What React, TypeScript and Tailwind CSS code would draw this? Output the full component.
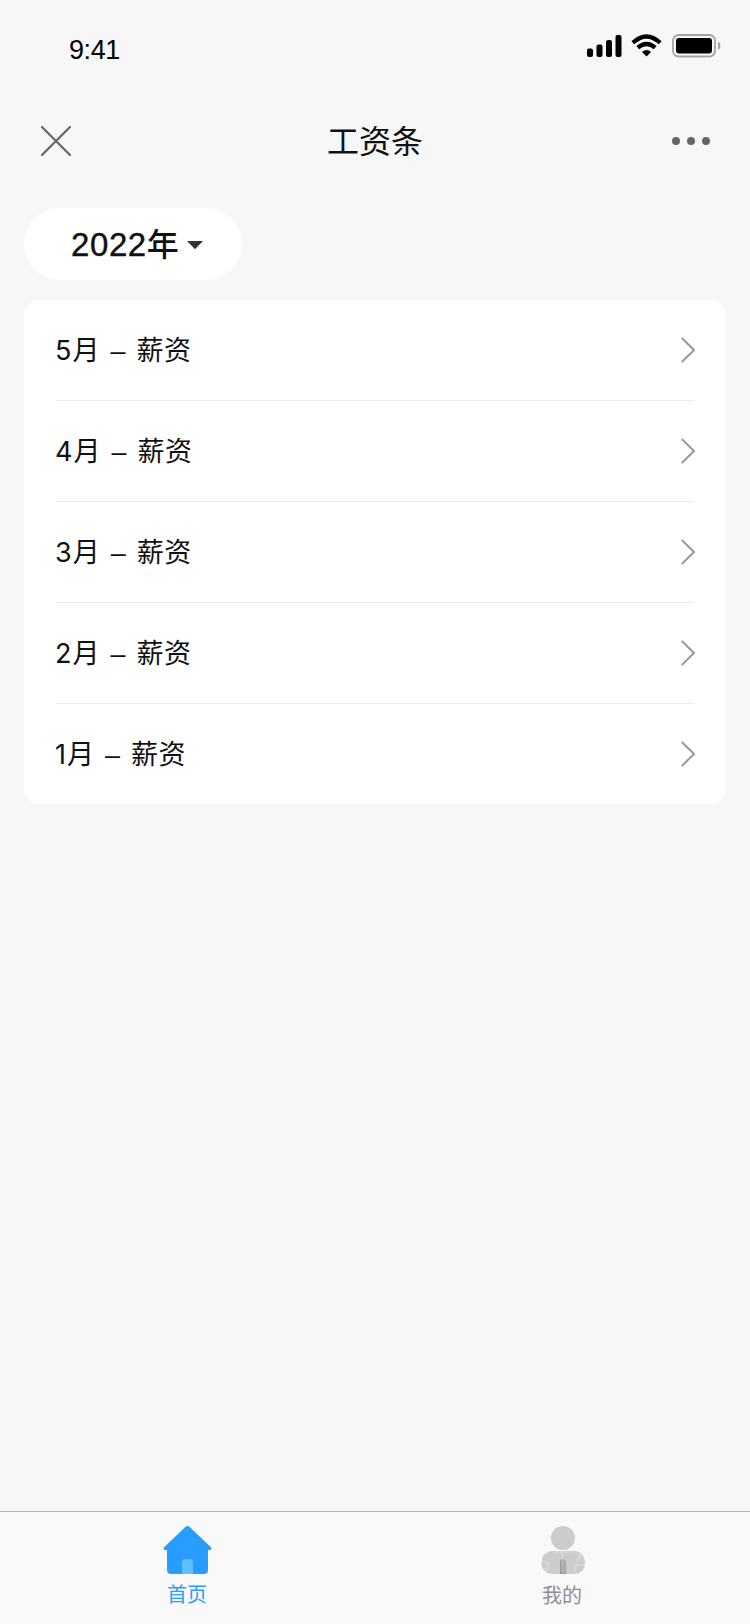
const months = ['5', '4', '3', '2', '1'];

function StatusBar() {
  return (
    <header className="flex h-[94px] items-start justify-between pl-[69px] pr-[29px]">
      <span className="mt-[29px] font-['Liberation_Sans'] text-[27px] leading-[42px] tracking-[-0.4px] text-black">9:41</span>
      <svg className="mt-[32px]" width="134" height="28" viewBox="0 0 134 28" fill="none">
        <g fill="#000">
          <rect x="0" y="16.5" width="6" height="8.5" rx="2" />
          <rect x="9.5" y="12.5" width="6" height="12.5" rx="2" />
          <rect x="19" y="8" width="6" height="17" rx="2" />
          <rect x="28.5" y="3" width="6" height="22" rx="2" />
          <path d="M59.5 24.5 L55 20 Q59.5 16 64 20 Z" />
        </g>
        <g stroke="#000" strokeWidth="4.2">
          <path d="M45.8 10.8 Q59.5 -1.8 73.2 10.8" />
          <path d="M50.8 15.7 Q59.5 8.2 68.2 15.7" />
        </g>
        <rect x="86" y="3" width="42" height="21.5" rx="5.5" stroke="#a3a3a3" strokeWidth="1.8" />
        <rect x="89" y="6" width="36" height="15.5" rx="3" fill="#000" />
        <path d="M131 9.5 C134.3 11 134.3 16.5 131 18 Z" fill="#a3a3a3" />
      </svg>
    </header>
  );
}

function NavBar() {
  return (
    <nav className="grid h-[94px] grid-cols-[1fr_auto_1fr] items-center pl-[40px] pr-[40px]">
      <svg width="32" height="32" viewBox="0 0 32 32" stroke="#666" strokeWidth="2.2" strokeLinecap="round">
        <path d="M2 2 L30 30 M30 2 L2 30" />
      </svg>
      <h1 className="pt-[2px] text-[32px] leading-[48px] text-[#111]">工资条</h1>
      <svg className="justify-self-end" width="40" height="32" viewBox="0 0 40 32" fill="#666">
        <circle cx="6" cy="16" r="4" />
        <circle cx="21" cy="16" r="4" />
        <circle cx="36" cy="16" r="4" />
      </svg>
    </nav>
  );
}

function HomeIcon() {
  return (
    <svg width="50" height="50" viewBox="0 0 50 50">
      <path d="M22.3 2 Q24.5 0.2 26.7 2 L47.7 22 Q49.5 25 46.5 25 H45 V45 Q45 49 41 49 H8 Q4 49 4 45 V25 H2.5 Q-0.5 25 1.3 22 Z" fill="#279eff" />
      <path d="M19 49 V37.5 Q19 34 22.5 34 H26.5 Q30 34 30 37.5 V49 Z" fill="#5ec0ff" />
    </svg>
  );
}

function UserIcon() {
  return (
    <svg width="50" height="50" viewBox="0 0 50 50">
      <defs>
        <linearGradient id="tie" x1="0" x2="1" y1="0" y2="0">
          <stop offset="0" stopColor="#999" />
          <stop offset="1" stopColor="#adadad" />
        </linearGradient>
      </defs>
      <circle cx="25" cy="13" r="12" fill="#ccc" />
      <rect x="3.5" y="26" width="43.5" height="23" rx="10.5" fill="#ccc" />
      <path d="M22 49 V37 Q22 34 25 34 Q28 34 28 37 V49 Z" fill="url(#tie)" />
    </svg>
  );
}

function Watermark() {
  return (
    <div className="pointer-events-none absolute left-[434px] top-[22px] flex items-center text-white opacity-20">
      <svg width="48" height="52" viewBox="0 0 48 52" fill="currentColor">
        <path fillRule="evenodd" d="M24 0 C10 0 1 9 1 22 C1 36 14 43 24 51 C34 43 47 36 47 22 C47 9 38 0 24 0 Z M27 10 L14 27 H22 L19 39 L34 21 H25 Z" />
      </svg>
      <span className="ml-[13px] mt-[2px] font-['Lato'] text-[28px] leading-[40px] tracking-[3.6px]">FASTADMIN</span>
    </div>
  );
}

export default function App() {
  return (
    <div className="flex h-[1624px] w-[750px] flex-col overflow-hidden bg-[#f7f7f7] font-['Liberation_Sans','Noto_Sans_CJK_SC',sans-serif]">
      <StatusBar />
      <NavBar />
      <main className="flex flex-1 flex-col items-start gap-5 px-6 pt-5">
        <button className="flex h-[72px] w-[218px] items-center rounded-full bg-white pl-[47px] text-[#111]">
          <span className="pt-[2px] text-[33px] leading-[48px] tracking-[0.6px] [-webkit-text-stroke:0.4px_#111]">
            2022<span className="text-[32px] font-medium [-webkit-text-stroke:0px]">年</span>
          </span>
          <svg className="ml-[8px] mt-[2px]" width="16" height="8" viewBox="0 0 16 8" fill="#333">
            <path d="M0 0 H16 L9 7.3 Q8 8.3 7 7.3 Z" />
          </svg>
        </button>
        <ul className="w-full rounded-2xl bg-white px-8">
          {months.map((month) => (
            <li key={month} className="flex h-[101px] items-center justify-between border-b border-[#ececec] text-[27px] text-[#111] last:h-[100px] last:border-b-0">
              <span className="flex items-baseline pt-[2px] leading-[40px]">
                <span className="-ml-px mr-px font-['Inter'] text-[27px] font-normal">{month}</span>
                <span>月</span>
                <span className="mx-[11px]">–</span>
                <span className="tracking-[0.5px]">薪资</span>
              </span>
              <svg className="-mr-[2px]" width="16" height="26" viewBox="0 0 16 26" fill="none" stroke="#999" strokeWidth="2" strokeLinecap="round">
                <path d="M2.3 1.5 L14 13 L2.3 24.5" />
              </svg>
            </li>
          ))}
        </ul>
      </main>
      <footer className="relative grid h-[113px] grid-cols-2 border-t border-[#b3b3b3] bg-[#f9f9f9] text-[20px] leading-[30px]">
        <a className="flex flex-col items-center pt-[13px] text-[#2a9dff]">
          <HomeIcon />
          <span className="-ml-px mt-[5px]">首页</span>
        </a>
        <a className="flex flex-col items-center pt-[13px] text-[#8e8e93]">
          <UserIcon />
          <span className="-ml-px mt-[6px]">我的</span>
        </a>
        <Watermark />
      </footer>
    </div>
  );
}
